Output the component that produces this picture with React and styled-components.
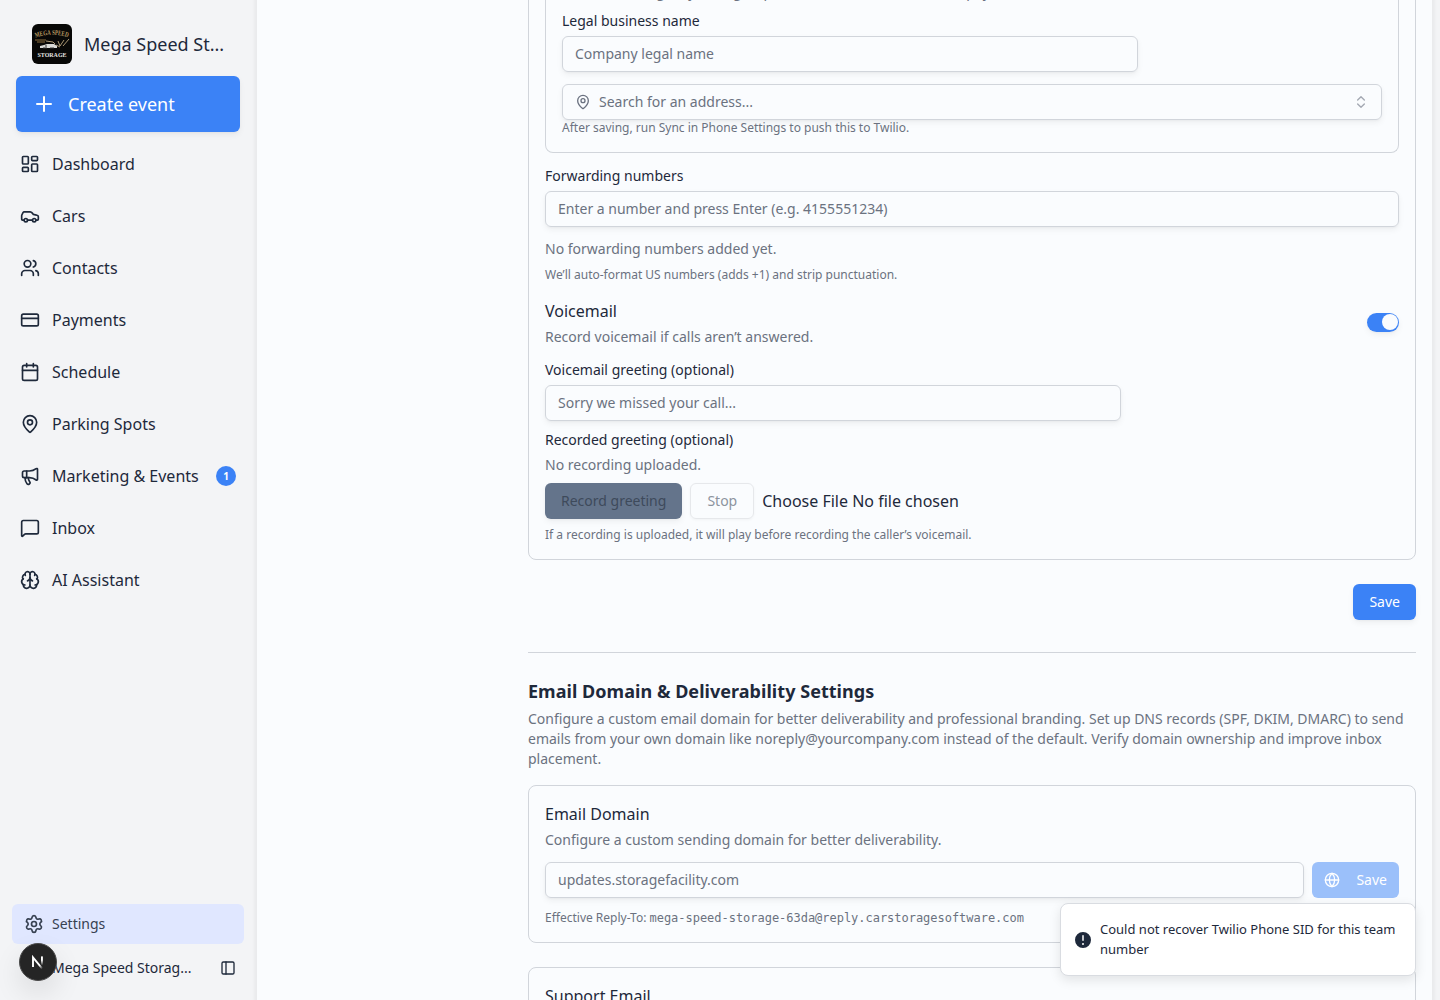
import React from "react";
import styled, { createGlobalStyle } from "styled-components";
import {
    Plus, LayoutDashboard, Car, Users, CreditCard, Calendar, MapPin, Megaphone,
    MessageSquare, Brain, Settings, PanelLeft, ChevronsUpDown, Globe
} from "lucide-react";

const GlobalStyle = createGlobalStyle`
    *, *::before, *::after { box-sizing: border-box; }
    body {
        margin: 0;
        height: 1000px;
        overflow: hidden;
        background: #f3f4f6;
        color: #1e293b;
        font-family: "Noto Sans", sans-serif;
        font-size: 16px;
        line-height: 24px;
    }
    p, h2, h3 { margin: 0; }
    button, input { font: inherit; }
`

const shadow = "0 1px 2px rgba(0, 0, 0, 0.03), 0 3px 6px rgba(0, 0, 0, 0.05)";

const links = [
    { label: "Dashboard", icon: LayoutDashboard },
    { label: "Cars", icon: Car },
    { label: "Contacts", icon: Users },
    { label: "Payments", icon: CreditCard },
    { label: "Schedule", icon: Calendar },
    { label: "Parking Spots", icon: MapPin },
    { label: "Marketing & Events", icon: Megaphone, count: 1 },
    { label: "Inbox", icon: MessageSquare },
    { label: "AI Assistant", icon: Brain }
];

export default function App(){
    return (<Page>
        <GlobalStyle/>
        <Sidebar/>
        <Main>
            <Content>
                <PhoneCard/>
                <SaveRow><Button>Save</Button></SaveRow>
                <Divider/>
                <EmailSection/>
            </Content>
        </Main>
        <Toast>
            <AlertIcon/>
            <span>Could not recover Twilio Phone SID for this team number</span>
        </Toast>
        <DevBadge><NextMark/></DevBadge>
    </Page>)
}

const Sidebar = () => (<Side>
    <Brand>
        <Logo/>
        <BrandName>Mega Speed St...</BrandName>
    </Brand>
    <CreateButton><Plus size={24}/>Create event</CreateButton>
    <Nav>
        {links.map(({ label, icon: Icon, count }) => (
            <NavLink key={label}>
                <Icon size={20}/>
                <span>{label}</span>
                {count && <Count>{count}</Count>}
            </NavLink>
        ))}
    </Nav>
    <SideFooter>
        <SettingsLink><Settings size={20}/>Settings</SettingsLink>
        <Team><span>Mega Speed Storag...</span><PanelLeft size={16}/></Team>
    </SideFooter>
</Side>)

const PhoneCard = () => (<PhoneBox>
    <AddressBox>
        <Hint $size={14}>Used for emergency calling as part of the dedicated business pay.</Hint>
        <Label $top={12}>Legal business name</Label>
        <Input $width="576px" placeholder="Company legal name"/>
        <Search>
            <MapPin size={16}/>
            <span>Search for an address...</span>
            <ChevronsUpDown size={16}/>
        </Search>
        <Hint>After saving, run Sync in Phone Settings to push this to Twilio.</Hint>
    </AddressBox>
    <Label $top={16}>Forwarding numbers</Label>
    <Input placeholder="Enter a number and press Enter (e.g. 4155551234)"/>
    <Hint $size={14} $top={12}>No forwarding numbers added yet.</Hint>
    <Hint $top={8}>We’ll auto-format US numbers (adds +1) and strip punctuation.</Hint>
    <SwitchRow>
        <div>
            <CardTitle>Voicemail</CardTitle>
            <Hint $size={14} $top={4}>Record voicemail if calls aren’t answered.</Hint>
        </div>
        <Switch><Thumb/></Switch>
    </SwitchRow>
    <Label $top={16}>Voicemail greeting (optional)</Label>
    <Input $width="576px" placeholder="Sorry we missed your call..."/>
    <Label $top={12}>Recorded greeting (optional)</Label>
    <Hint $size={14}>No recording uploaded.</Hint>
    <RecordRow>
        <RecordButton>Record greeting</RecordButton>
        <StopButton>Stop</StopButton>
        <span>Choose File No file chosen</span>
    </RecordRow>
    <Hint $top={8}>If a recording is uploaded, it will play before recording the caller’s voicemail.</Hint>
</PhoneBox>)

const EmailSection = () => (<>
    <SectionTitle>Email Domain &amp; Deliverability Settings</SectionTitle>
    <SectionText>
        Configure a custom email domain for better deliverability and professional branding. Set up DNS records (SPF, DKIM, DMARC) to send emails from your own domain like noreply@yourcompany.com instead of the default. Verify domain ownership and improve inbox placement.
    </SectionText>
    <Card>
        <CardTitle>Email Domain</CardTitle>
        <Hint $size={14} $top={4}>Configure a custom sending domain for better deliverability.</Hint>
        <DomainRow>
            <DomainInput placeholder="updates.storagefacility.com"/>
            <DomainSave><Globe size={16}/>Save</DomainSave>
        </DomainRow>
        <Hint $top={12}>Effective Reply-To: <Mono>mega-speed-storage-63da@reply.carstoragesoftware.com</Mono></Hint>
    </Card>
    <Card>
        <CardTitle>Support Email</CardTitle>
    </Card>
</>)

const Logo = () => (
    <LogoSvg viewBox="0 0 40 40">
        <defs><path id="arch" d="M3.5 13.5Q20 8 36.5 13.5"/></defs>
        <text fontSize="7" fill="#b99a62" fontWeight="bold">
            <textPath href="#arch" startOffset="0" textLength="33" lengthAdjust="spacingAndGlyphs">MEGA SPEED</textPath>
        </text>
        <path d="M3 16h11M5 18h8" stroke="#8a6c3c" strokeWidth="1.2"/>
        <path d="M14 17l7 1 2 2M26 17l2 5 4-6M31 22l6-7M24 21l4 2" stroke="#aa9774" strokeWidth="1" fill="none"/>
        <path d="M8 22l4-1 3-1h7l3 2v2H8z" fill="#d9d9d6"/>
        <path d="M11 24h4M18 24h4M14 21v2" stroke="#333" strokeWidth="1"/>
        <text x="5.5" y="33" fontSize="7" fill="#e5e5e3" fontWeight="bold" textLength="29" lengthAdjust="spacingAndGlyphs">STORAGE</text>
    </LogoSvg>
)

const AlertIcon = () => (
    <AlertSvg viewBox="0 0 20 20" fill="#1e293b">
        <path fillRule="evenodd" clipRule="evenodd" d="M18 10a8 8 0 1 1-16 0 8 8 0 0 1 16 0Zm-8-5a.75.75 0 0 1 .75.75v4.5a.75.75 0 0 1-1.5 0v-4.5A.75.75 0 0 1 10 5Zm0 10a1 1 0 1 0 0-2 1 1 0 0 0 0 2Z"/>
    </AlertSvg>
)

const NextMark = () => (
    <svg width="14" height="14" viewBox="0 0 14 14" fill="none">
        <defs>
            <linearGradient id="fade" x1="0" y1="0" x2="0" y2="1">
                <stop offset="0.4" stopColor="#fff"/>
                <stop offset="1" stopColor="#fff" stopOpacity="0"/>
            </linearGradient>
            <linearGradient id="tail" x1="0" y1="0" x2="1" y2="1">
                <stop offset="0.7" stopColor="#fff"/>
                <stop offset="1" stopColor="#fff" stopOpacity="0"/>
            </linearGradient>
        </defs>
        <path d="M2 12V2.4l9.4 11.4" stroke="url(#tail)" strokeWidth="1.9"/>
        <rect x="10" y="1.4" width="1.9" height="9" fill="url(#fade)"/>
    </svg>
)

const Page = styled.div`
    display: flex;
    height: 1000px;
    overflow: hidden;
    padding-right: 8px;
`
const Side = styled.aside`
    display: flex;
    flex-direction: column;
    width: 257px;
    flex: none;
    padding: 24px 13px 12px 12px;
`
const Brand = styled.div`
    display: flex;
    align-items: center;
    gap: 12px;
    padding-left: 20px;
`
const LogoSvg = styled.svg`
    width: 40px;
    height: 40px;
    border-radius: 6px;
    background: #080807;
    font-family: "Liberation Serif", serif;
`
const BrandName = styled.span`
    font-size: 18px;
    line-height: 28px;
`
const CreateButton = styled.button`
    display: flex;
    align-items: center;
    gap: 12px;
    height: 56px;
    margin: 12px 4px 6px;
    padding: 0 16px;
    border: 0;
    border-radius: 6px;
    background: #3b82f6;
    color: #fff;
    font-size: 18px;
    box-shadow: ${shadow};
`
const Nav = styled.nav`
    display: flex;
    flex-direction: column;
`
const NavLink = styled.a`
    display: flex;
    align-items: center;
    gap: 12px;
    height: 52px;
    padding: 0 8px;
`
const Count = styled.span`
    width: 20px;
    height: 20px;
    margin-left: auto;
    border-radius: 50%;
    background: #3b82f6;
    color: #fff;
    font-size: 10px;
    font-weight: 700;
    line-height: 20px;
    text-align: center;
`
const SideFooter = styled.div`
    margin-top: auto;
    font-size: 14px;
`
const SettingsLink = styled.a`
    display: flex;
    align-items: center;
    gap: 8px;
    height: 40px;
    padding: 0 12px;
    border-radius: 6px;
    background: #e0e7ff;
    color: #374151;
`
const Team = styled.div`
    display: flex;
    align-items: center;
    justify-content: space-between;
    height: 40px;
    margin-top: 4px;
    padding: 0 8px 0 40px;
`
const Main = styled.main`
    flex: 1;
    padding: 0 16px 0 271px;
    background: #fafcfe;
    box-shadow: 0 0 3px 3px rgba(0, 0, 0, 0.04);
    overflow: hidden;
`
const Content = styled.div`
    display: flex;
    flex-direction: column;
`
const Card = styled.section`
    display: flex;
    flex-direction: column;
    margin-bottom: 24px;
    padding: 16px;
    border: 1px solid #d1d5db;
    border-radius: 8px;
`
/* the page is scrolled, so the top of this card is above the fold */
const PhoneBox = styled(Card)`
    margin-top: -35px;
    margin-bottom: 0;
`
const AddressBox = styled.div`
    display: flex;
    flex-direction: column;
    padding: 0 16px 16px;
    border: 1px solid #d1d5db;
    border-top: 0;
    border-radius: 0 0 8px 8px;
`
const Label = styled.label`
    margin-top: ${props => props.$top || 0}px;
    margin-bottom: 8px;
    font-size: 14px;
    line-height: 14px;
`
const Hint = styled.p`
    margin-top: ${props => props.$top || 0}px;
    color: #6b7280;
    font-size: ${props => props.$size || 12}px;
    line-height: ${props => props.$size ? 20 : 16}px;
`
const Input = styled.input`
    width: ${props => props.$width || "100%"};
    height: 36px;
    flex: none;
    padding: 0 12px 2px;
    border: 1px solid #d1d5db;
    border-radius: 6px;
    background: transparent;
    font-size: 14px;
    box-shadow: ${shadow};
    &::placeholder { color: #6b7280; }
`
const Search = styled.div`
    display: flex;
    align-items: center;
    gap: 8px;
    height: 36px;
    margin-top: 12px;
    padding: 0 12px;
    border: 1px solid #d1d5db;
    border-radius: 6px;
    color: #6b7280;
    font-size: 14px;
    box-shadow: ${shadow};
    svg:last-child { margin-left: auto; opacity: 0.6; }
`
const CardTitle = styled.h3`
    font-size: 16px;
    font-weight: 400;
    line-height: 24px;
`
const SwitchRow = styled.div`
    display: flex;
    align-items: center;
    justify-content: space-between;
    margin-top: 16px;
`
const Switch = styled.div`
    display: flex;
    align-items: center;
    justify-content: flex-end;
    width: 32px;
    height: 19px;
    margin-bottom: 2px;
    padding: 1px;
    border-radius: 10px;
    background: #3b82f6;
    box-shadow: ${shadow};
`
const Thumb = styled.span`
    width: 16px;
    height: 16px;
    border-radius: 50%;
    background: #fafcfe;
`
const RecordRow = styled.div`
    display: flex;
    align-items: center;
    gap: 8px;
    margin-top: 8px;
`
const Button = styled.button`
    height: 36px;
    padding: 0 16px;
    border: 0;
    border-radius: 6px;
    background: #3b82f6;
    color: #fff;
    font-size: 14px;
    box-shadow: ${shadow};
`
const RecordButton = styled(Button)`
    background: #64748b;
    color: #3e4a5b;
`
const StopButton = styled(Button)`
    border: 1px solid #e6e8eb;
    background: transparent;
    color: #8d949e;
    box-shadow: 0 1px 3px rgba(0, 0, 0, 0.04);
`
const SaveRow = styled.div`
    display: flex;
    justify-content: flex-end;
    margin: 24px 0 32px;
`
const Divider = styled.hr`
    width: 100%;
    height: 1px;
    margin: 0;
    border: 0;
    background: #d1d5db;
`
const SectionTitle = styled.h2`
    margin-top: 24px;
    font-size: 18px;
    font-weight: 700;
    line-height: 28px;
    letter-spacing: 0.04px;
`
const SectionText = styled.p`
    margin: 4px 0 16px;
    color: #6b7280;
    font-size: 14px;
    line-height: 20px;
`
const DomainRow = styled.div`
    display: flex;
    gap: 8px;
    margin-top: 12px;
`
const DomainInput = styled(Input)`
    flex: 1;
    min-width: 0;
`
const DomainSave = styled(Button)`
    display: flex;
    align-items: center;
    gap: 16px;
    flex: none;
    padding: 0 12px;
    background: #9bc0fa;
    box-shadow: none;
`
const Mono = styled.span`
    font-family: "DejaVu Sans Mono", monospace;
    font-size: 12px;
    letter-spacing: -0.025px;
`
const Toast = styled.div`
    position: absolute;
    left: 1060px;
    top: 903px;
    display: flex;
    align-items: center;
    gap: 7px;
    width: 356px;
    height: 73px;
    padding: 0 13px 1px 12px;
    border: 1px solid #d9dce1;
    border-radius: 8px;
    background: #fff;
    font-size: 13px;
    line-height: 20px;
    box-shadow: 0 4px 12px rgba(0, 0, 0, 0.1);
`
const AlertSvg = styled.svg`
    width: 20px;
    height: 20px;
    flex: none;
    margin-top: 2px;
`
const DevBadge = styled.div`
    position: absolute;
    left: 19px;
    top: 943px;
    display: flex;
    align-items: center;
    justify-content: center;
    width: 38px;
    height: 38px;
    border: 1px solid #4a4a4a;
    border-radius: 50%;
    background: #252525;
    box-shadow: 0 12px 28px rgba(0, 0, 0, 0.1);
`
